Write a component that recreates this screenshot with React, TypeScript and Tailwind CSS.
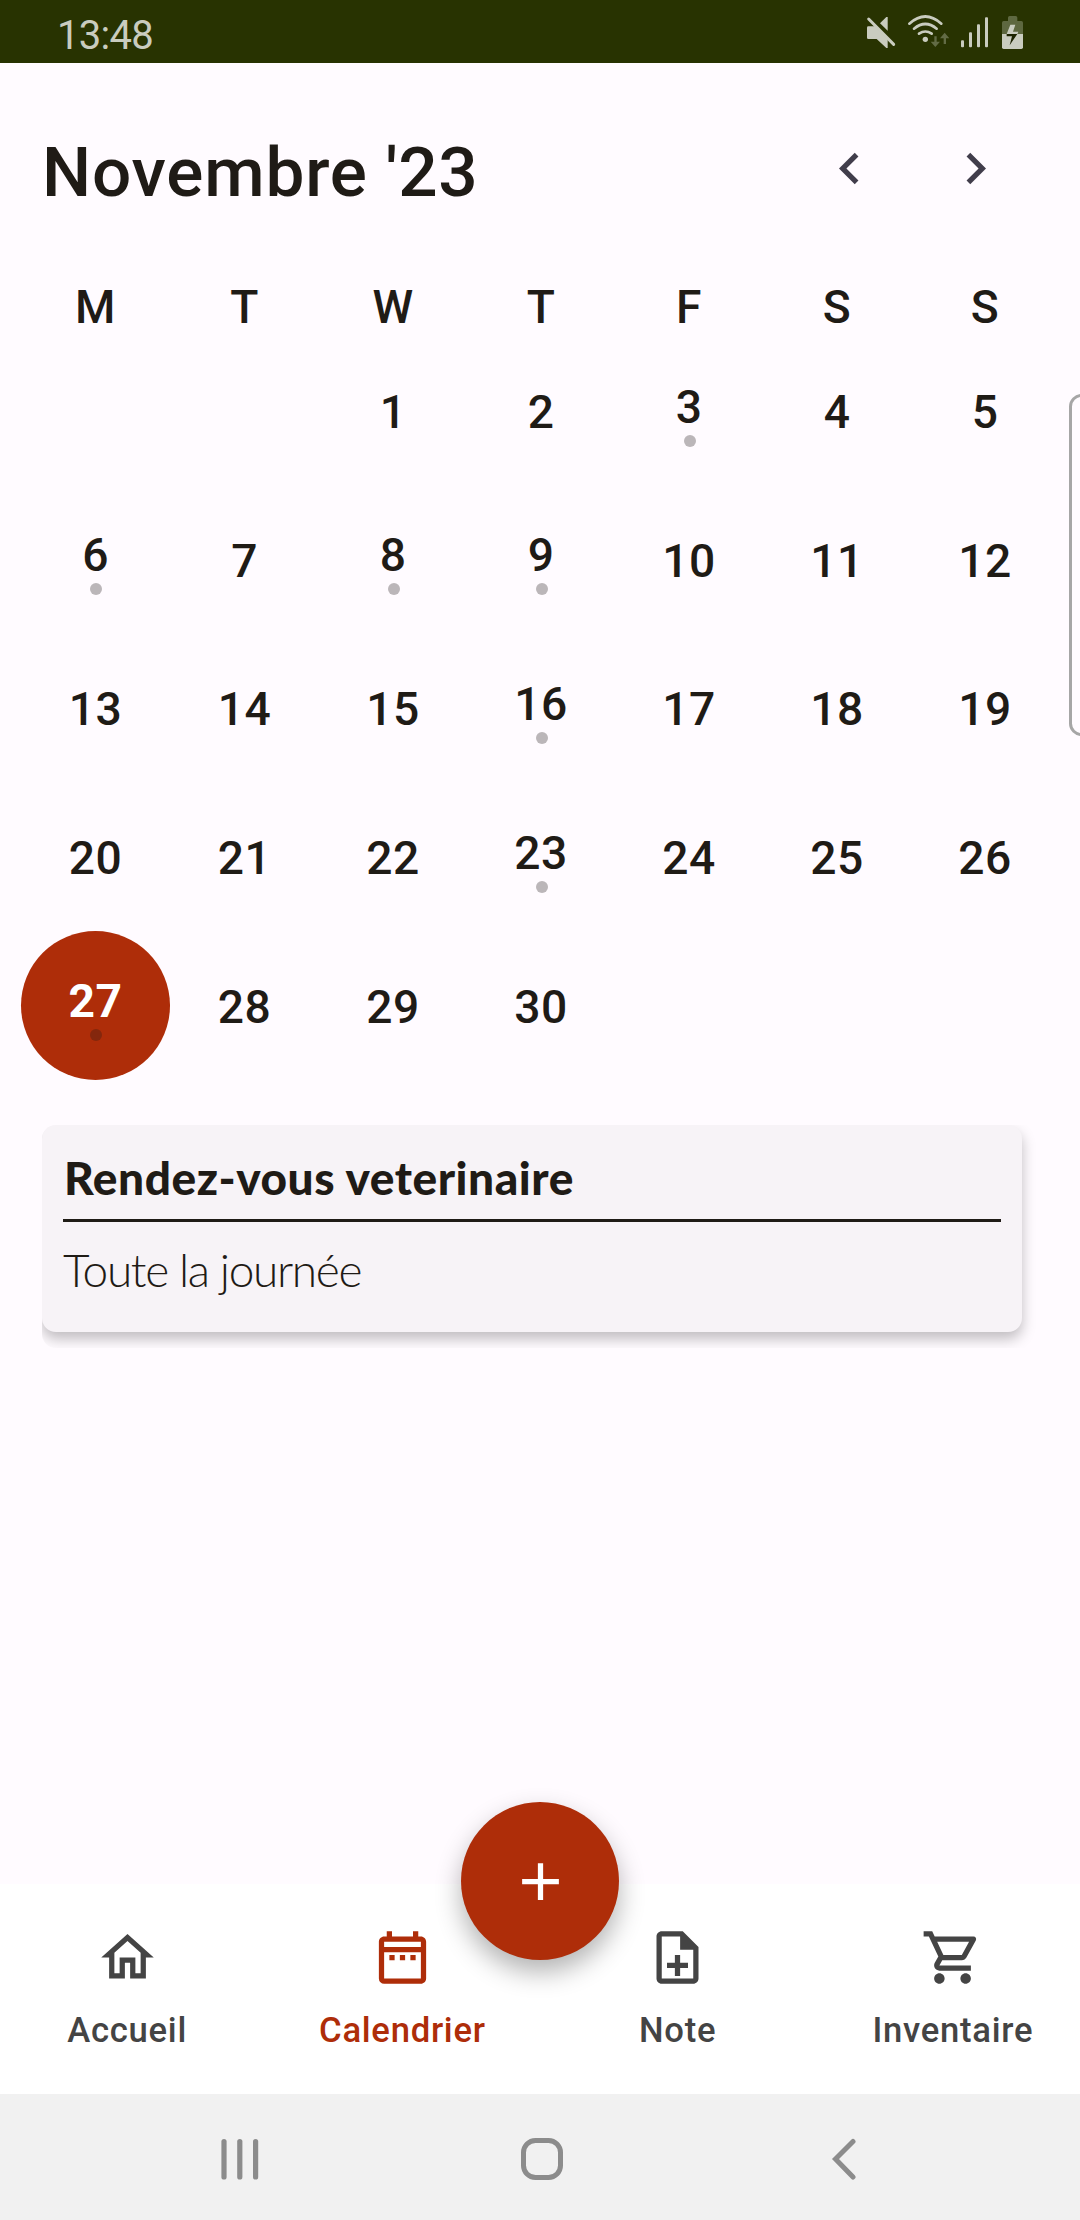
const INK = 'text-[#1f1b16]';

const WEEKDAYS = ['M', 'T', 'W', 'T', 'F', 'S', 'S'];
const LEADING_BLANKS = 2;
const DAYS_IN_MONTH = 30;
const SELECTED_DAY = 27;
const EVENT_DAYS = [3, 6, 8, 9, 16, 23, 27];

function StatusBar() {
  return (
    <header className="flex h-[63px] shrink-0 items-center justify-between bg-[#283301] pl-[57px] pr-[40px]">
      <span className="pt-[8px] text-[40px] leading-none tracking-[-0.7px] text-[#c9ccbf]">13:48</span>
      <svg viewBox="0 0 570 189" className="h-[63px] w-[190px]" fill="#c9ccbf">
        {/* muted speaker */}
        <path d="M90 70l19-19h4v41z" />
        <path d="M51 83q0-4 4-4h20l38 40v25h-4L80 117H55q-4 0-4-4z" />
        <path d="M56 57L131 133" stroke="#c9ccbf" strokeWidth="9" strokeLinecap="round" />
        {/* wifi */}
        <g fill="none" stroke="#c9ccbf" strokeWidth="8" strokeLinecap="round">
          <path d="M178 71Q226 28 274 71" />
          <path d="M192 86Q226 58 260 86" />
          <path d="M207 101Q226 88 245 101" />
        </g>
        <circle cx="226" cy="118" r="8" />
        <path d="M253 109h7v16h10l-14 16-14-16h11z" fill="#626b45" />
        <path d="M281 132h7v-17h10l-14-17-14 17h11z" fill="#626b45" />
        {/* signal */}
        <rect x="333" y="121" width="9" height="21" rx="3" />
        <rect x="357" y="97" width="9" height="45" rx="3" />
        <rect x="381" y="73" width="9" height="69" rx="3" />
        <rect x="405" y="52" width="9" height="90" rx="3" />
        {/* battery */}
        <path d="M474 63V53q0-5 5-5h18q5 0 5 5v10h12q5 0 5 5v35h-63V68q0-5 5-5z" fill="#5e6840" />
        <path d="M456 102h63v40q0 5-5 5h-53q-5 0-5-5z" />
        <path d="M481 74h15l-7 21h16l-3 7h-32z" />
        <path d="M470 102h32l-23 34 7-27h-16z" fill="#1c2300" />
      </svg>
    </header>
  );
}

function MonthHeader() {
  return (
    <div className="flex h-[126px] items-center justify-between px-[42px]">
      <h1 className={`pt-[9px] text-[69.3px] font-medium leading-none tracking-[0.8px] ${INK}`}>Novembre '23</h1>
      <div className="flex text-[#413d4b]">
        <button className="flex size-[126px] items-center justify-center" aria-label="Mois précédent">
          <svg viewBox="0 0 24 24" className="size-[63px]" fill="currentColor">
            <path d="M15.41 7.41L14 6l-6 6 6 6 1.41-1.41L10.83 12z" />
          </svg>
        </button>
        <button className="flex size-[126px] items-center justify-center" aria-label="Mois suivant">
          <svg viewBox="0 0 24 24" className="size-[63px]" fill="currentColor">
            <path d="M10 6L8.59 7.41 13.17 12l-4.58 4.59L10 18l6-6z" />
          </svg>
        </button>
      </div>
    </div>
  );
}

function DayCell({ day }: { day: number }) {
  const selected = day === SELECTED_DAY;
  const hasEvent = EVENT_DAYS.includes(day);
  return (
    <div
      className={`flex h-[148.6px] flex-col items-center justify-center rounded-full ${
        selected ? 'bg-[#ae2d09] font-bold text-white' : ''
      }`}
    >
      <span className={`${hasEvent ? 'h-[54px] leading-[52px]' : 'h-[50px] leading-[53px]'}`}>{day}</span>
      {hasEvent && (
        <span className={`mb-[-5px] ml-[1px] size-3 rounded-full ${selected ? 'bg-[#84270d]' : 'bg-[#bbb6b9]'}`} />
      )}
    </div>
  );
}

function Calendar() {
  return (
    <section className={`px-[21px] text-center text-[46.2px] font-medium tracking-[0.43px] ${INK}`}>
      <div className="grid h-[84px] grid-cols-[149px_149px_repeat(5,148px)] items-center pt-[25px] leading-none">
        {WEEKDAYS.map((d, i) => (
          <span key={i}>{d}</span>
        ))}
      </div>
      <div className="grid grid-cols-[149px_149px_repeat(5,148px)]">
        {Array.from({ length: LEADING_BLANKS }, (_, i) => (
          <div key={`blank-${i}`} />
        ))}
        {Array.from({ length: DAYS_IN_MONTH }, (_, i) => (
          <DayCell key={i} day={i + 1} />
        ))}
      </div>
    </section>
  );
}

function EventCard() {
  return (
    <div className="ml-[42px] mt-[45px] h-[223px] w-[1010px] overflow-hidden rounded-l-[14px]">
      <article
        className={`h-[207px] w-[980px] rounded-[14px] bg-[#f7f3f7] px-[21px] font-[Lato,sans-serif] shadow-[0_7px_14px_rgba(0,0,0,0.25)] ${INK}`}
      >
        <h2 className="h-[94px] whitespace-nowrap pl-[1px] pt-[29px] text-[46px] font-black leading-[48px] tracking-[0.55px]">
          Rendez-vous veterinaire
        </h2>
        <hr className="border-t-[3px] border-[#1f1b16]" />
        <p className="whitespace-nowrap pt-[24px] text-[46px] font-light leading-[48px] tracking-[-1.35px]">
          Toute la journée
        </p>
      </article>
    </div>
  );
}

const NAV = [
  { label: 'Accueil', d: 'M12 5.69l5 4.5V18h-2v-6H9v6H7v-7.81l5-4.5M12 3L2 12h3v8h6v-6h2v6h6v-8h3L12 3z' },
  {
    label: 'Calendrier',
    active: true,
    d: 'M7 11h2v2H7v-2zm14-5v14c0 1.1-.9 2-2 2H5a2 2 0 01-2-2V6c0-1.1.9-2 2-2h1V2h2v2h8V2h2v2h1c1.1 0 2 .9 2 2zM5 8h14V6H5v2zm14 12V10H5v10h14zm-4-7h2v-2h-2v2zm-4 0h2v-2h-2v2z',
  },
  {
    label: 'Note',
    d: 'M13 11h-2v3H8v2h3v3h2v-3h3v-2h-3zm1-9H6c-1.1 0-2 .9-2 2v16c0 1.1.89 2 1.99 2H18c1.1 0 2-.9 2-2V8l-6-6zm4 18H6V4h7v5h5v11z',
  },
  {
    label: 'Inventaire',
    d: 'M15.55 13c.75 0 1.41-.41 1.75-1.03l3.58-6.49A.996.996 0 0020.01 4H5.21l-.94-2H1v2h2l3.6 7.59-1.35 2.44C4.52 15.37 5.48 17 7 17h12v-2H7l1.1-2h7.45zM6.16 6h12.15l-2.76 5H8.53L6.16 6zM7 18c-1.1 0-1.99.9-1.99 2S5.9 22 7 22s2-.9 2-2-.9-2-2-2zm10 0c-1.1 0-1.99.9-1.99 2s.89 2 1.99 2 2-.9 2-2-.9-2-2-2z',
  },
];

function BottomNav() {
  return (
    <nav className="relative grid h-[210px] shrink-0 grid-cols-4 gap-[21px] bg-white">
      {NAV.map((item) => (
        <div
          key={item.label}
          className={`flex flex-col items-center pt-[42px] ${item.active ? 'text-[#ae2d09]' : 'text-[#444444]'}`}
        >
          <svg viewBox="0 0 24 24" className="size-[63px]" fill="currentColor">
            <path d={item.d} />
          </svg>
          <span className="mt-[17px] text-[34.65px] font-medium leading-[48px] tracking-[0.72px]">{item.label}</span>
        </div>
      ))}
      <button
        className="absolute left-1/2 top-[-82px] flex size-[158px] -translate-x-1/2 items-center justify-center rounded-full bg-[#ae2d09] text-white shadow-[0_12px_26px_rgba(0,0,0,0.3)]"
        aria-label="Ajouter"
      >
        <svg viewBox="0 0 24 24" className="size-[63px]" fill="currentColor">
          <path d="M19 13h-6v6h-2v-6H5v-2h6V5h2v6h6z" />
        </svg>
      </button>
    </nav>
  );
}

function SystemBar() {
  return (
    <footer className="flex h-[126px] shrink-0 items-center justify-between bg-[#f1f1f1] pl-[219px] pr-[217px] pt-[3px] text-[#8c8c8c]">
      <svg viewBox="0 0 42 42" className="size-[42px]" fill="currentColor">
        <rect x="2.4" y="1" width="5.2" height="40.5" rx="2.6" />
        <rect x="18.2" y="1" width="5.2" height="40.5" rx="2.6" />
        <rect x="34" y="1" width="5.2" height="40.5" rx="2.6" />
      </svg>
      <svg viewBox="0 0 42 42" className="ml-[2px] size-[42px]" fill="none" stroke="currentColor" strokeWidth="5">
        <rect x="2.5" y="2.5" width="37" height="37" rx="12" />
      </svg>
      <svg viewBox="0 0 42 42" className="size-[42px]" fill="none" stroke="currentColor" strokeWidth="5">
        <path d="M32 3.5L14.5 21 32 39" strokeLinecap="round" />
      </svg>
    </footer>
  );
}

export default function App() {
  return (
    <div className="relative flex h-[2220px] w-[1080px] flex-col overflow-hidden bg-[#fffbff] font-[Roboto,sans-serif]">
      <StatusBar />
      <main className="flex grow flex-col">
        <div className="pt-[42px]">
          <MonthHeader />
        </div>
        <div className="mt-[22px]">
          <Calendar />
        </div>
        <EventCard />
      </main>
      <BottomNav />
      <SystemBar />
      {/* edge panel handle */}
      <div className="absolute right-[-14px] top-[394px] h-[342px] w-[25px] rounded-[13px] border-[3px] border-[#a6a6a6] bg-[#fffbff]" />
    </div>
  );
}
